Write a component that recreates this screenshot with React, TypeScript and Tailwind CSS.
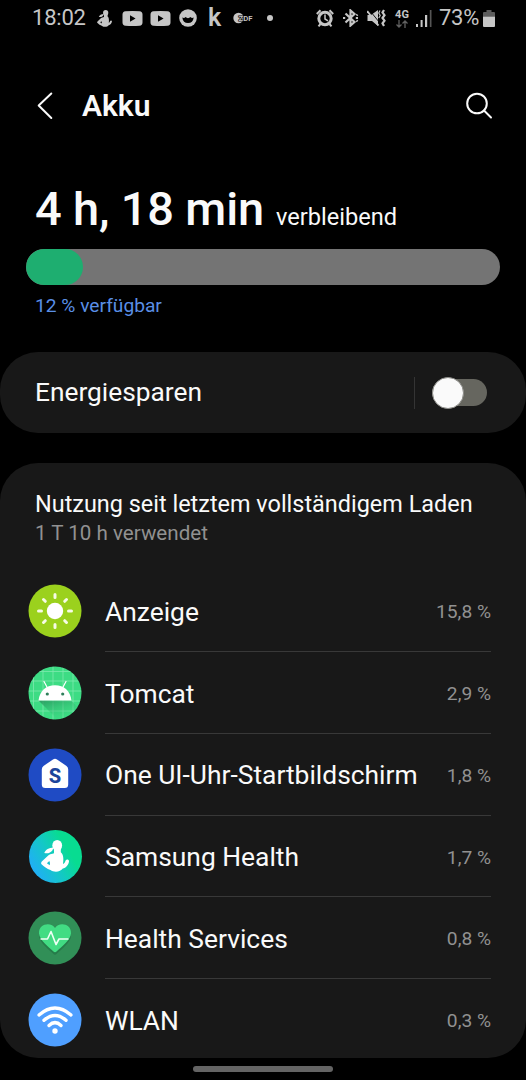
import type { ReactNode } from 'react';

const HealthFigure = ({ className }: { className: string }) => (
    <svg viewBox="0 0 28 32" className={className} fill="currentColor">
        <ellipse cx="16.2" cy="5.4" rx="4.9" ry="5.4" />
        <path d="M3.300 13 C4.500 9.500 8 7.800 12.500 7.500 L11.500 10.200 C9.800 12.800 6.500 14 3.300 13 Z" />
        <path fillRule="evenodd" d="M13 8 H19.800 L19.800 12.300 C22.300 14 22.800 18 22 24 C23.400 23.600 24 22.200 24.600 20.600 C25.500 19 28.200 19.300 28 21.600 C27.500 25 25 28 21.800 28.600 C19.500 32.300 12.500 32.500 9.500 30 C6 29 2.800 26.600 .8 24.600 C-.2 23.500 0 22.600 .8 21.600 L7.500 15.200 C9 14 11 13.800 13 13.200 Z M8.300 21 L5.900 23.200 L8.700 25.200 C9.200 23.800 9 22.200 8.300 21 Z" />
    </svg>
);

const YoutubeIcon = ({ className }: { className: string }) => (
    <svg viewBox="0 0 21 16" className={className}>
        <path fill="#c6c6c6" fillRule="evenodd" d="M3.500 .7 Q10.500 .1 17.500 .7 Q20.500 1 20.500 4 V12 Q20.500 15 17.500 15.300 Q10.500 15.800 3.500 15.300 Q.5 15 .5 12 V4 Q.5 1 3.500 .7 Z M8 4.800 V11.200 L13.600 8 Z" />
    </svg>
);

function StatusBar() {
    return (
        <div className="flex h-9 items-center pl-8 text-[#c6c6c6]">
            <span className="w-[65px] text-[22px] leading-9 tracking-[-0.2px]">18:02</span>
            <HealthFigure className="h-[17px] w-[15px]" />
            <YoutubeIcon className="ml-[10px] h-[17px] w-[21px]" />
            <YoutubeIcon className="ml-[7px] h-[17px] w-[21px]" />
            <svg viewBox="0 0 18 18" className="ml-2 h-[18px] w-[18px]">
                <circle cx="9" cy="9" r="8.800" fill="#c6c6c6" />
                <path d="M3.300 8.500 Q5.300 9.500 6.500 8 Q9 10.300 11.500 8 Q12.800 9.500 14.700 8.500 Q14 14 9 14 Q4 14 3.300 8.500 Z" fill="#000" />
            </svg>
            <span className="ml-[11px] w-[15px] text-[25px] leading-9 font-semibold">k</span>
            <svg viewBox="0 0 20 12" className="ml-[10px] h-3 w-5">
                <circle cx="5.500" cy="6" r="5.200" fill="#c6c6c6" />
                <text x="5.500" y="8.600" fontSize="7" fontWeight="600" textLength="14" lengthAdjust="spacingAndGlyphs" fill="#c6c6c6" stroke="#000" strokeWidth="1.200" paintOrder="stroke">ZDF</text>
            </svg>
            <span className="ml-[14px] h-[6px] w-[6px] rounded-full bg-[#c6c6c6]" />

            <svg viewBox="0 0 18 18" className="ml-[43px] h-[18px] w-[18px]" fill="none" stroke="#c6c6c6">
                <circle cx="9" cy="9.500" r="6.200" strokeWidth="3" />
                <path d="M9 5.500 V10 L12 11.800" strokeWidth="1.500" />
                <path d="M.8 5 L4.500 1.300 M17.200 5 L13.500 1.300 M2.500 17.300 L4.500 15 M15.500 17.300 L13.500 15" strokeWidth="2" />
            </svg>
            <svg viewBox="0 0 17 18" className="ml-2 h-[18px] w-[17px]" fill="none" stroke="#c6c6c6" strokeWidth="2.200">
                <path d="M3.500 4.500 L12.500 13 L8.500 16.500 V1.500 L12.500 5 L3.500 13.500" />
                <path d="M1 9 H3.200 M13.800 9 H16 M14.500 6.500 L15.500 5.500 M14.500 11.500 L15.500 12.500" />
            </svg>
            <svg viewBox="0 0 19 18" className="ml-2 h-[18px] w-[19px]" fill="none" stroke="#c6c6c6">
                <path d="M.5 6 H4 L11 1 V17 L5 12 H.5 Z" fill="#c6c6c6" stroke="none" />
                <path d="M2.500 1.200 L12.500 13.500" stroke="#000" strokeWidth=".9" />
                <path d="M.2 2 L11.500 16.500" strokeWidth="1.800" />
                <path d="M13 1.500 L11.800 4 L13.200 6.500 L11.800 9" strokeWidth="1.200" />
                <path d="M17 1 L15.500 3.500 L17.500 6.200 L15.500 9 L17.500 11.700 L15.500 14.300 L17 17" strokeWidth="2.200" />
            </svg>
            <div className="ml-[9px] flex w-[14px] flex-col items-center">
                <span className="text-[11px] leading-[11px] font-bold">4G</span>
                <svg viewBox="0 0 12 8" className="h-2 w-3" fill="none" stroke="#606060" strokeWidth="1.300">
                    <path d="M3 0 V7 M.5 4.500 L3 7 L5.500 4.500 M9 8 V1 M6.500 3.500 L9 1 L11.500 3.500" />
                </svg>
            </div>
            <svg viewBox="0 0 16 17" className="ml-[7px] h-[17px] w-4" fill="#c6c6c6">
                <path d="M0 14 H2 V17 H0 Z M4.600 10 H6.600 V17 H4.600 Z M9 5 H11.200 V17 H9 Z" />
                <path d="M13.800 0 H15.500 V17 H13.800 Z" fill="#555" />
            </svg>
            <span className="ml-[7px] w-[43px] text-[22px] leading-9 tracking-[-0.3px]">73%</span>
            <svg viewBox="0 0 12 17" className="ml-px h-[17px] w-3">
                <path d="M3.500 0 H8.500 V2 H11 Q12 2 12 3 V6.500 H0 V3 Q0 2 1 2 H3.500 Z" fill="#5c5c5c" />
                <path d="M0 6.500 H12 V16 Q12 17 11 17 H1 Q0 17 0 16 Z" fill="#c6c6c6" />
            </svg>
        </div>
    );
}

const DisplayIcon = () => (
    <svg viewBox="0 0 54 54" className="h-[54px] w-[54px]">
        <circle cx="27" cy="27" r="26.500" fill="#9bd11d" />
        <circle cx="27" cy="27" r="8.200" fill="#fff" />
        <g stroke="#f6fbe5" strokeWidth="3" strokeLinecap="round">
            <path d="M27 10.500 V13.500 M27 40.500 V43.500 M10.500 27 H13.500 M40.500 27 H43.500" />
            <path d="M15.500 15.500 L17.300 17.300 M36.700 36.700 L38.500 38.500 M15.500 38.500 L17.300 36.700 M36.700 17.300 L38.500 15.500" />
        </g>
    </svg>
);

const AndroidIcon = () => (
    <svg viewBox="0 0 54 54" className="h-[54px] w-[54px]">
        <clipPath id="android">
            <circle cx="27" cy="27" r="26.500" />
        </clipPath>
        <linearGradient id="shade" x1="0" y1="0" x2=".7" y2="1">
            <stop offset="0" stopColor="#238b57" stopOpacity=".8" />
            <stop offset="1" stopColor="#3ddc84" stopOpacity="0" />
        </linearGradient>
        <g clipPath="url(#android)">
            <path d="M0 0 H54 V54 H0 Z" fill="#3ddc84" />
            <path d="M5.500 0 V54 M15 0 V54 M25 0 V54 M35 0 V54 M45 0 V54 M0 5.500 H54 M0 15 H54 M0 25 H54 M0 35 H54 M0 45 H54" stroke="#7de8ad" strokeWidth=".8" />
            <path d="M10.500 34.500 L30 54 H54 V46 L43 34.500 Z" fill="url(#shade)" />
        </g>
        <path d="M10.500 34.500 C11.500 25 18 19.200 27 19.200 C36 19.200 42.500 25 43.500 34.500 Z" fill="#fff" />
        <path d="M19.500 22 L16 15.500 M34.500 22 L38 15.500" stroke="#fff" strokeWidth="1.200" strokeLinecap="round" />
        <circle cx="19.300" cy="28" r="1.600" fill="#2f7f5b" />
        <circle cx="34.700" cy="28" r="1.600" fill="#2f7f5b" />
    </svg>
);

const WatchHomeIcon = () => (
    <svg viewBox="0 0 54 54" className="h-[54px] w-[54px]">
        <circle cx="27" cy="27" r="26.500" fill="#1f4bc4" />
        <path d="M25 11.400 Q27 10 29 11.400 L38.500 18 Q40.200 19.400 40.200 21.500 V36.500 Q40.200 40 36.700 40 H17.300 Q13.800 40 13.800 36.500 V21.500 Q13.800 19.400 15.500 18 Z" fill="#fff" />
        <text x="27" y="34.500" textAnchor="middle" fontSize="20" fontWeight="800" fill="#1c459b">S</text>
    </svg>
);

const SamsungHealthIcon = () => (
    <div className="flex h-[53px] w-[53px] items-center justify-center rounded-full bg-linear-[60deg,#23aaff_8%,#13c9c4_45%,#08dc91_70%] text-white">
        <HealthFigure className="h-8 w-7" />
    </div>
);

const HealthServicesIcon = () => (
    <svg viewBox="0 0 54 54" className="h-[54px] w-[54px]">
        <circle cx="27" cy="27" r="26.500" fill="#318f57" />
        <path d="M27 18 C30 12 43.500 12.500 43 23.500 C42.500 30 34 36.500 28.500 41.500 Q27 43 25.500 41.500 C20 36.500 11.500 30 11 23.500 C10.500 12.500 24 12 27 18 Z" fill="#267c4a" transform="translate(0 1.500)" />
        <path d="M27 17 C30 11 43.500 11.500 43 22.500 C42.500 29 34 35.500 28.500 40.500 Q27 42 25.500 40.500 C20 35.500 11.500 29 11 22.500 C10.500 11.500 24 11 27 17 Z" fill="#42dc83" />
        <path d="M12.500 28 H19.500 L23 20.500 L28 33.500 L31 28 H40.500" fill="none" stroke="#effff5" strokeWidth="1.600" strokeLinejoin="round" />
    </svg>
);

const WifiIcon = () => (
    <svg viewBox="0 0 54 54" className="h-[54px] w-[54px]">
        <circle cx="27" cy="27" r="26.500" fill="#4f9fff" />
        <g fill="none" stroke="#fff" strokeWidth="3.400" strokeLinecap="round">
            <path d="M11 22 Q27 8 43 22" />
            <path d="M16 27.300 Q27 17.500 38 27.300" />
            <path d="M21 32.500 Q27 26.800 33 32.500" />
        </g>
        <circle cx="27" cy="38" r="2.700" fill="#fff" />
    </svg>
);

interface Usage {
    name: string;
    percent: string;
    icon: ReactNode;
}

const usages: Usage[] = [
    { name: 'Anzeige', percent: '15,8 %', icon: <DisplayIcon /> },
    { name: 'Tomcat', percent: '2,9 %', icon: <AndroidIcon /> },
    { name: 'One UI-Uhr-Startbildschirm', percent: '1,8 %', icon: <WatchHomeIcon /> },
    { name: 'Samsung Health', percent: '1,7 %', icon: <SamsungHealthIcon /> },
    { name: 'Health Services', percent: '0,8 %', icon: <HealthServicesIcon /> },
    { name: 'WLAN', percent: '0,3 %', icon: <WifiIcon /> },
];

export default function App() {
    const level = 12;

    return (
        <div className="flex h-[1080px] w-[526px] flex-col overflow-hidden bg-black font-[Roboto,sans-serif] text-[#fafafa]">
            <StatusBar />

            <header className="mt-12 flex h-11 items-center pr-[33px] pl-9">
                <svg viewBox="0 0 18 28" className="h-7 w-[18px]" fill="none" stroke="currentColor" strokeWidth="2" strokeLinecap="round" strokeLinejoin="round">
                    <path d="M15.300 1.500 L2.700 13.500 L15.300 26" />
                </svg>
                <h1 className="ml-7 text-[30px] leading-[44px] font-semibold">Akku</h1>
                <svg viewBox="0 0 28 28" className="ml-auto h-7 w-7" fill="none" stroke="currentColor" strokeWidth="2" strokeLinecap="round">
                    <circle cx="12" cy="11.500" r="9.800" />
                    <path d="M19 18.500 L26 25.500" />
                </svg>
            </header>

            {/* Remaining time */}
            <section className="mt-[50px]">
                <div className="flex h-[62px] items-baseline pl-[35px]">
                    <span className="w-[229px] text-[47px] leading-[62px] font-medium tracking-[-0.18px] whitespace-nowrap">4 h, 18 min</span>
                    <span className="ml-[12px] text-[23.600px]">verbleibend</span>
                </div>
                <div className="mx-[26px] mt-[9px] h-9 overflow-hidden rounded-full bg-[#747474]">
                    <div className="h-full rounded-full bg-[#1eae70]" style={{ width: `${level}%` }} />
                </div>
                <p className="mt-[9px] pl-[35px] text-[19.200px] leading-6 text-[#5a8fe6]">{level} % verfügbar</p>
            </section>

            <section className="mt-[34px] flex h-[81px] shrink-0 items-center rounded-[38px] bg-[#181818] pr-[39px] pl-[35px]">
                <span className="text-[26.300px]">Energiesparen</span>
                <div className="ml-auto h-8 w-px bg-[#343434]" />
                <div className="ml-[17px] flex h-[27px] w-[55px] items-center rounded-full bg-[#66665f]">
                    <div className="h-8 w-8 shrink-0 rounded-full border border-[#8c8c88] bg-[#fafafa]" />
                </div>
            </section>

            {/* Usage list */}
            <section className="mt-[30px] h-[595px] shrink-0 rounded-[38px] bg-[#181818] pt-[26px]">
                <h2 className="pl-[35px] text-[23.450px] leading-[30px]">Nutzung seit letztem vollständigem Laden</h2>
                <p className="pl-[35px] text-[20.600px] leading-[29px] text-[#919191]">1 T 10 h verwendet</p>
                <ul className="mt-[22.500px]">
                    {usages.map((usage, i) => (
                        <li key={usage.name} className="flex h-[81.700px] items-center pr-[35px] pl-[28.300px]">
                            <div className="flex w-[54px] shrink-0 justify-center">{usage.icon}</div>
                            <div className={`ml-[22.700px] flex h-full flex-1 items-center justify-between pt-1 ${i < usages.length - 1 ? 'border-b-[1.500px] border-[#383838]' : ''}`}>
                                <span className="text-[26.400px] whitespace-nowrap">{usage.name}</span>
                                <span className="text-[19.200px] whitespace-nowrap text-[#919191]">{usage.percent}</span>
                            </div>
                        </li>
                    ))}
                </ul>
            </section>

            <div className="mx-auto mt-2 h-[6px] w-[140px] shrink-0 rounded-full bg-[#646464]" />
        </div>
    );
}
